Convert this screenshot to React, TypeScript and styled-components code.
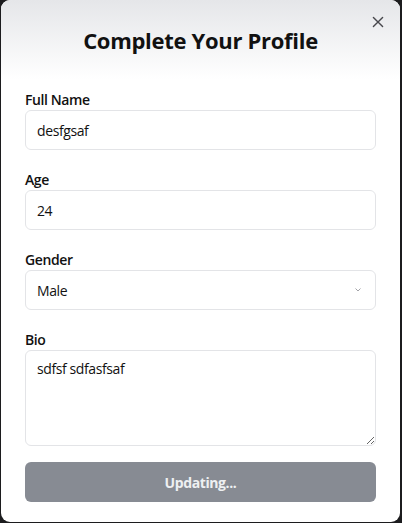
import React from "react";
import styled, { createGlobalStyle } from "styled-components";

const Global = createGlobalStyle`
  html, body { margin: 0; padding: 0; background: #1c1c1e; }
  body { font-family: "Open Sans", "Noto Sans", sans-serif; }
  * { box-sizing: border-box; }
`;

const Page = styled.div`
  padding-left: 1px;
  width: 402px;
  height: 523px;
`;

const Card = styled.div`
  position: relative;
  width: 399px;
  height: 522px;
  background: #ffffff;
  border-radius: 9px;
  overflow: hidden;
  display: flex;
  flex-direction: column;
`;

const Header = styled.div`
  padding: 24px 24px 34px;
  background: linear-gradient(to bottom, #e5e6e9 0%, #ffffff 88%);
  display: flex;
  justify-content: center;
`;

const Title = styled.h1`
  margin: 0;
  font-size: 22px;
  line-height: 32px;
  font-weight: 700;
  color: #111111;
  letter-spacing: -0.3px;
`;

const CloseButton = styled.button`
  position: absolute;
  top: 12px;
  right: 12px;
  width: 20px;
  height: 20px;
  padding: 0;
  border: none;
  background: transparent;
  color: #48484d;
  display: flex;
  align-items: center;
  justify-content: center;
  cursor: pointer;
`;

const Form = styled.form`
  padding: 0 24px;
  display: flex;
  flex-direction: column;
  gap: 20px;
`;

const Field = styled.div`
  display: flex;
  flex-direction: column;
`;

const Label = styled.label`
  font-size: 14px;
  line-height: 20px;
  font-weight: 600;
  color: #111111;
  letter-spacing: -0.4px;
`;

const fieldBase = `
  width: 100%;
  border: 1px solid #e3e4e7;
  border-radius: 6px;
  background: #ffffff;
  font-family: "Open Sans", "Noto Sans", sans-serif;
  font-size: 14px;
  letter-spacing: -0.4px;
  color: #111111;
  outline: none;
`;

const TextInput = styled.input`
  ${fieldBase}
  height: 40px;
  padding: 0 11px;
`;

const SelectWrap = styled.div`
  position: relative;
`;

const Select = styled.select`
  ${fieldBase}
  height: 40px;
  padding: 0 11px;
  appearance: none;
  -webkit-appearance: none;
`;

const Chevron = styled.svg`
  position: absolute;
  right: 15px;
  top: 18px;
  pointer-events: none;
`;

const TextArea = styled.textarea`
  ${fieldBase}
  display: block;
  height: 96px;
  padding: 8px 11px;
  line-height: 20px;
  resize: vertical;
`;

const SubmitButton = styled.button`
  margin-top: -4px;
  height: 40px;
  width: 100%;
  border: none;
  border-radius: 6px;
  background: #878b93;
  color: #eef0f2;
  font-family: "Open Sans", "Noto Sans", sans-serif;
  font-size: 14px;
  font-weight: 700;
  letter-spacing: -0.4px;
`;

export default function App() {
  return (
    <Page>
      <Global />
      <Card>
        <Header>
          <Title>Complete Your Profile</Title>
        </Header>
        <CloseButton type="button" aria-label="Close">
          <svg width="20" height="20" viewBox="0 0 24 24" fill="none" stroke="currentColor" strokeWidth="1.7" strokeLinecap="round">
            <path d="M6.5 6.5l11 11M17.5 6.5l-11 11" />
          </svg>
        </CloseButton>
        <Form onSubmit={(e) => e.preventDefault()}>
          <Field>
            <Label>Full Name</Label>
            <TextInput defaultValue="desfgsaf" />
          </Field>
          <Field>
            <Label>Age</Label>
            <TextInput defaultValue="24" />
          </Field>
          <Field>
            <Label>Gender</Label>
            <SelectWrap>
              <Select defaultValue="Male">
                <option>Male</option>
                <option>Female</option>
                <option>Other</option>
              </Select>
              <Chevron width="6" height="4" viewBox="0 0 6 4" fill="none" stroke="#a3a3a8" strokeWidth="1">
                <path d="M0.5 0.5L3 3L5.5 0.5" />
              </Chevron>
            </SelectWrap>
          </Field>
          <Field>
            <Label>Bio</Label>
            <TextArea defaultValue="sdfsf sdfasfsaf" />
          </Field>
          <SubmitButton type="submit" disabled>Updating...</SubmitButton>
        </Form>
      </Card>
    </Page>
  );
}
